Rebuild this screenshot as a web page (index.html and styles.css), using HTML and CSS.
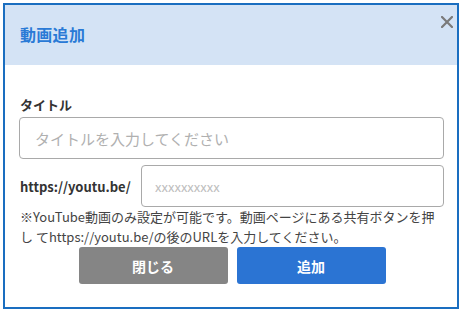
FILE: index.html
```html
<!DOCTYPE html>
<html lang="ja">
<head>
    <meta charset="UTF-8" />
    <meta name="viewport" content="width=device-width, initial-scale=1.0" />
    <title>動画追加</title>
    <link rel="stylesheet" href="styles.css">
</head>
<body>
    <div class="modal">
        <div class="modal-header">
            <h2 class="modal-title">動画追加</h2>
            <button class="modal-close" aria-label="閉じる">
                <svg width="12" height="12" viewBox="0 0 12 12">
                    <path d="M1 1 L11 11 M11 1 L1 11" stroke="#7a7a7a" stroke-width="2.2" stroke-linecap="square" />
                </svg>
            </button>
        </div>
        <div class="modal-body">
            <label class="field-label" for="title">タイトル</label>
            <input id="title" class="text-input" placeholder="タイトルを入力してください" />
            <div class="url-row">
                <label class="url-prefix" for="video-id">https://youtu.be/</label>
                <input id="video-id" class="text-input id-input" placeholder="xxxxxxxxxx" />
            </div>
            <p class="note">※YouTube動画のみ設定が可能です。動画ページにある共有ボタンを押し てhttps://youtu.be/の後のURLを入力してください。</p>
            <div class="actions">
                <button class="btn btn-close">閉じる</button>
                <button class="btn btn-add">追加</button>
            </div>
        </div>
    </div>
</body>
</html>
```

FILE: styles.css
```css
* { box-sizing: border-box; }
body {
    margin: 0;
    background-color: #fff;
    font-family: "Noto Sans CJK JP", "Noto Sans", sans-serif;
    color: #333;
}
.modal {
    margin: 3px;
    width: 456px;
    height: 306px;
    border: 2px solid #1a6ec0;
    display: flex;
    flex-direction: column;
}
.modal-header {
    position: relative;
    height: 60px;
    background-color: #d4e3f5;
    display: flex;
    align-items: center;
    padding: 0 15px 2px;
}
.modal-title {
    margin: 0;
    font-size: 16px;
    font-weight: bold;
    color: #2a7ad6;
    letter-spacing: 0.3px;
}
.modal-close {
    position: absolute;
    top: 11px;
    right: 4px;
    padding: 0;
    border: none;
    background: none;
    width: 12px;
    height: 12px;
    cursor: pointer;
}
.modal-close svg { display: block; }
.modal-body {
    flex: 1;
    padding: 30px 13px 0 14px;
    display: flex;
    flex-direction: column;
}
.field-label {
    font-size: 13px;
    font-weight: bold;
    line-height: 19px;
    margin-bottom: 3px;
    padding-left: 1px;
}
.text-input {
    height: 42px;
    width: 100%;
    border: 1px solid #a9a9a9;
    border-radius: 4px;
    padding: 0 15px;
    font-family: inherit;
    font-size: 15px;
    color: #333;
    outline: none;
}
.text-input::placeholder { color: #b0b0b0; }
.url-row {
    display: flex;
    align-items: center;
    margin-top: 6px;
}
.url-prefix {
    flex: none;
    width: 122px;
    padding-left: 1px;
    font-size: 13px;
    font-weight: bold;
}
.id-input {
    flex: 1;
    width: auto;
    padding-left: 13px;
    font-size: 13px;
}
.id-input::placeholder { color: #bdbdbd; }
.note {
    margin: 0;
    padding-left: 1px;
    font-size: 13px;
    line-height: 20px;
    color: #444;
}
.actions {
    display: flex;
    justify-content: center;
    gap: 9px;
    padding-left: 1px;
}
.btn {
    width: 149px;
    height: 37px;
    border: none;
    border-radius: 3px;
    color: #fff;
    font-family: inherit;
    font-size: 14px;
    font-weight: bold;
    cursor: pointer;
}
.btn-close { background-color: #858585; }
.btn-add { background-color: #2b74d3; }
```
